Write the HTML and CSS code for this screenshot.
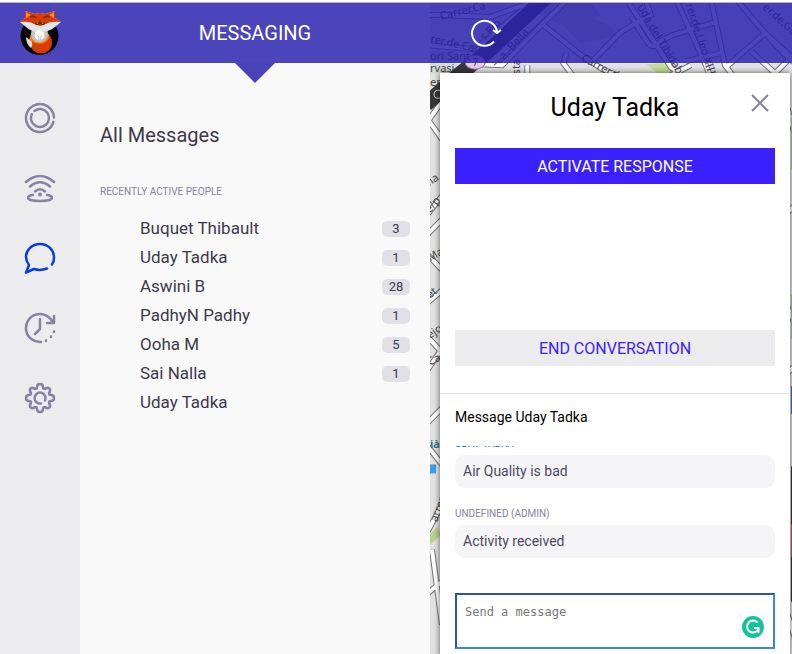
FILE: index.html
```html
<!DOCTYPE html>
<html lang="en">
<head>
<meta charset="utf-8">
<meta name="viewport" content="width=device-width, initial-scale=1">
<title>Messaging</title>
<link rel="stylesheet" href="styles.css">
</head>
<body>
<div class="app">
  <svg class="map" viewBox="0 0 362 651" preserveAspectRatio="xMinYMin slice" aria-hidden="true">
    <rect width="362" height="651" fill="#e2e2e2"/>
    <path d="M105 0L124 14L150 9L180 23L185 34L150 40L130 20ZM90 0H160L170 12L130 22Z" fill="#c9cfbf"/>
    <path d="M216 61L232 60L250 72H230Z" fill="#c6da96"/>
    <path d="M0 48H25V70H0Z" fill="#d5ddd5"/>
    <g class="street-edge">
      <path id="s1" d="M-4 12H12L60 14L110 -4M-4 42L45 46L105 -4M48 61L72 62L112 21L148 50L172 66L205 80M97 62V80M136 50L133 60L148 80M112 21L138 -4M160 60L190 29L220 12L214 -6M198 0L240 64L255 75M201 14L216 38Q222 48 230 38L242 32L285 19M245 -4L275 62L282 80M280 -4L294 62L308 80M255 58L290 50M295 64L334 30L365 58M305 -4L334 30L352 50L366 62M320 48L344 70L362 52M240 72L260 62"/>
    </g>
    <g class="street"><use href="#s1"/></g>
    <g class="street-edge">
      <path id="s2" d="M-5 122L12 98M-5 112L15 140M-2 210L14 190M-4 232L16 212M-5 248L14 268M-4 300L15 284M-5 330L18 355M-4 368L15 340M-4 420L16 400M-4 440L16 465M-4 530L12 500M2 545L12 620M-4 590L14 575M355 100L366 140M355 210L366 200M355 300L366 325M355 370L366 360M355 605L366 640"/>
    </g>
    <g class="street"><use href="#s2"/></g>
    <path d="M-4 101L28 72L56 50L116 -6" stroke="#383838" stroke-width="15" fill="none"/>
    <path d="M64 62L128 2" stroke="#666" fill="none"/>
    <ellipse cx="45" cy="59" rx="10" ry="7" fill="#e5cdea" stroke="#9b78a5"/>
    <circle cx="8" cy="91" r="4" fill="none" stroke="#ccc"/>
    <path d="M0 530L7 522L11 530L0 540Z" fill="#b9d08d"/>
    <path d="M360 114H362V166H360ZM360 290H362V335H360ZM360 540H362V552H360Z" fill="#afbf8b"/>
    <path d="M360 382H362V410H360Z" fill="#2468d0"/>
    <path d="M360 462H362V597H360Z" fill="#242424"/>
    <path d="M360 520H362V552H360Z" fill="#e05050"/>
    <rect y="460" width="6" height="9" fill="#3ba0e8"/>
    <g class="map-label">
      <text x="11" y="17" transform="rotate(-14 11 17)">Carrer.Ca</text>
      <text x="0" y="39" transform="rotate(12 0 39)">rer.de.Car</text>
      <text x="54" y="38" transform="rotate(-45 54 38)">s.Rib</text>
      <text x="0" y="57">ori Sant</text>
      <text x="0" y="69">rvasi</text>
      <text x="0" y="83">en</text>
      <text x="42" y="63">7</text>
      <text x="74" y="57" transform="rotate(-48 74 57)">a. Bella</text>
      <text x="90" y="74" transform="rotate(-90 90 74)">ista</text>
      <text x="150" y="57" transform="rotate(28 150 57)">Carrer.d</text>
      <text x="206" y="4" transform="rotate(59 206 4)">uda.del.Tibidabo</text>
      <text x="255" y="2" transform="rotate(72 255 2)">rer.de.Lleó.XIII</text>
      <text x="331" y="5" transform="rotate(42 331 5)">er.de.Gom</text>
      <text x="-4" y="185" transform="rotate(-35 -4 185)">ma</text>
      <text x="0" y="210" transform="rotate(-50 0 210)">e/p</text>
      <text x="0" y="258" transform="rotate(-30 0 258)">Ma</text>
      <text x="0" y="295" transform="rotate(-40 0 295)">et</text>
      <text x="0" y="335" transform="rotate(-35 0 335)">ejo</text>
      <text x="0" y="362" transform="rotate(-30 0 362)">Ca</text>
      <text x="0" y="444" class="map-station">ià</text>
      <text x="7" y="518" transform="rotate(-70 7 518)">arrer</text>
    </g>
  </svg>

  <header class="topbar">
    <a class="logo" href="#" aria-label="Home">
      <svg width="42" height="46" viewBox="0 0 42 46">
        <circle cx="20.500" cy="26" r="19" fill="#050505"/>
        <circle cx="22" cy="32.500" r="11" fill="#d93c05"/>
        <path d="M10 30L16 33Q26 36 30 28V24H12Z" fill="#f08312"/>
        <circle cx="20.500" cy="24" r="8.500" fill="#c4c4c4"/>
        <path d="M7 27L13 32Q14 35 12 38Q7 34 7 27Z" fill="#ddd"/>
        <path d="M1 12L6 8L6 1L16 4Q21 2 26 4L36 1L36 8L42 12L36 17Q30 22 21 22Q12 22 7 17Z" fill="#e4e4e4"/>
        <path d="M1 12L6 8L6 1L16 4Q21 2 26 4L36 1L36 8L42 12Q31 11 27 14L21 16L15 14Q11 11 1 12Z" fill="#d83b08"/>
        <path d="M7 2L12 5L7 8ZM35 2L30 5L35 8Z" fill="#f58d1a"/>
        <path d="M11 7Q14 5 17 8M25 8Q28 5 31 7" fill="none" stroke="#7a2a0a" stroke-width="1.500"/>
        <path d="M16 13Q19 16 21 12Q23 16 26 13" fill="#fff" stroke="#5b2410" stroke-width="1.500"/>
        <circle cx="20.500" cy="25" r="5" fill="#fff"/>
        <path d="M18 25L20 27V31M23 25L21.500 27V31" fill="none" stroke="#c8c8c8"/>
      </svg>
    </a>
    <h1 class="title">MESSAGING</h1>
    <button class="refresh" type="button" aria-label="Refresh">
      <svg width="32" height="30" viewBox="0 0 32 30" fill="none" stroke="#fff" stroke-width="2">
        <path d="M24 23.500A12.500 12.500 0 1 1 27 14M23 12L27 15L31 12"/>
      </svg>
    </button>
  </header>

  <nav class="rail" aria-label="Main">
    <a href="#" aria-label="Overview"><svg width="32" height="32" viewBox="0 0 32 32"><circle cx="16" cy="16" r="14" stroke-dasharray="83 5" transform="rotate(16 16 16)"/><circle cx="16" cy="16" r="9" stroke-dasharray="52 4.500" transform="rotate(232 16 16)"/></svg></a>
    <a href="#" aria-label="Signals"><svg width="32" height="32" viewBox="0 0 32 32"><path d="M2 10Q16-2 30 10M6 14.500Q16 6 26 14.500M11 19.500Q16 15 21 19.500M9 23Q4 23.500 4 26C4 30 28 30 28 26Q28 23.500 23 23"/><circle cx="16" cy="22.500" r="2" class="dot"/></svg></a>
    <a class="active" href="#" aria-label="Messaging" aria-current="page"><svg width="32" height="32" viewBox="0 0 32 32"><path d="M28 22.500Q30 20 30 15.500C30 8 24 2 16 2S2 8 2 15Q2 19 5 23L2 30.500L10 27Q16 29 23 26.500"/></svg></a>
    <a href="#" aria-label="History"><svg width="32" height="32" viewBox="0 0 32 32"><path d="M17 30A14 14 0 1 1 29 11M30 4V11H23M16 7V17L11 22"/><path d="M30 19.500V20M27 24.500V25M22 28.500V29"/></svg></a>
    <a href="#" aria-label="Settings"><svg width="32" height="32" viewBox="0 0 32 32"><path d="M13 5Q13 2 16 2T19 5Q19 7 21 7Q23 5 25.500 6.500Q27 9 25 11Q25 13 27 13Q30 13 30 16T27 19Q25 19 25 21Q27 23 25.500 25.500Q23 27 21 25Q19 25 19 27Q19 30 16 30T13 27Q13 25 11 25Q9 27 6.500 25.500Q5 23 7 21Q7 19 5 19Q2 19 2 16T5 13Q7 13 7 11Q5 9 6.500 6.500Q9 5 11 7Q13 7 13 5ZM17 21.500A5.500 5.500 0 1 1 21 18.500"/></svg></a>
  </nav>

  <main class="people">
    <h2><a href="#">All Messages</a></h2>
    <h3>RECENTLY ACTIVE PEOPLE</h3>
    <ul>
      <li><a href="#">Buquet Thibault</a><span class="count">3</span></li>
      <li><a href="#">Uday Tadka</a><span class="count">1</span></li>
      <li><a href="#">Aswini B</a><span class="count">28</span></li>
      <li><a href="#">PadhyN Padhy</a><span class="count">1</span></li>
      <li><a href="#">Ooha M</a><span class="count">5</span></li>
      <li><a href="#">Sai Nalla</a><span class="count">1</span></li>
      <li><a href="#">Uday Tadka</a></li>
    </ul>
  </main>

  <section class="card" aria-labelledby="person">
    <div class="card-top">
      <h2 id="person">Uday Tadka</h2>
      <button class="close" type="button" aria-label="Close">
        <svg width="18" height="18" viewBox="0 0 18 18" fill="none" stroke="#8782a0" stroke-width="2"><path d="M1 1L17 17M17 1L1 17"/></svg>
      </button>
      <button class="action primary" type="button">ACTIVATE RESPONSE</button>
      <button class="action secondary" type="button">END CONVERSATION</button>
    </div>
    <div class="thread">
      <h3>Message Uday Tadka</h3>
      <div class="messages">
        <p class="author self">UDAY TADKA</p>
        <p class="bubble">Air Quality is bad</p>
        <p class="author">UNDEFINED (ADMIN)</p>
        <p class="bubble">Activity received</p>
      </div>
      <div class="composer">
        <textarea aria-label="Send a message" placeholder="Send a message" autofocus></textarea>
        <svg class="checker" width="22" height="22" viewBox="0 0 22 22" aria-hidden="true"><circle cx="11" cy="11" r="11" fill="#15c39a"/><path d="M15.500 6.500A6 6 0 1 0 16 14M12 12H16.500V17" fill="none" stroke="#fff" stroke-width="2"/></svg>
      </div>
    </div>
  </section>
</div>
</body>
</html>
```
FILE: styles.css
```css
* { box-sizing: border-box; }

body {
  height: 100vh;
  margin: 0;
  overflow: hidden;
  background: #fff;
  color: #3d3a4c;
  font-family: Roboto, "Liberation Sans", sans-serif;
}

h1, h2, h3, p, ul { margin: 0; padding: 0; font-weight: 400; }
ul { list-style: none; }
a { color: inherit; text-decoration: none; }
button { border: 0; padding: 0; background: none; font-family: inherit; cursor: pointer; }
svg { display: block; }

.app {
  display: grid;
  grid-template-columns: 80px 350px minmax(0, 1fr);
  grid-template-rows: 60px minmax(0, 1fr);
  height: 100vh;
  border-top: 1px solid #b5b5b5;
  margin-top: 2px;
  overflow: hidden;
}

.map {
  grid-column: 3;
  grid-row: 1 / 3;
  width: 100%;
  height: 100%;
}

.street-edge { fill: none; stroke: #777; stroke-width: 6; }
.street { fill: none; stroke: #fff; stroke-width: 4; }
.map-label { font-family: "Noto Sans", sans-serif; font-size: 11px; fill: #444; }
.map-station { fill: #35758f; font-weight: 700; }

.topbar {
  grid-column: 1 / 4;
  grid-row: 1;
  z-index: 1;
  display: grid;
  grid-template-columns: 80px 350px minmax(0, 1fr);
  align-items: center;
  background: rgba(42, 32, 173, 0.84);
  color: #fff;
}

.logo { justify-self: center; }
.title { position: relative; font-size: 20px; line-height: 60px; text-align: center; }
.title::after {
  content: "";
  position: absolute;
  top: 60px;
  left: 50%;
  margin-left: -20px;
  border: 20px solid transparent;
  border-bottom: 0;
  border-top-color: #4b43b5;
}
.refresh { justify-self: start; margin-left: 40px; }

.rail {
  grid-column: 1;
  grid-row: 2;
  display: flex;
  flex-direction: column;
  align-items: center;
  gap: 38px;
  padding-top: 39px;
  background: #ececee;
}
.rail svg { fill: none; stroke: #8782a0; stroke-width: 2.5; stroke-linecap: round; stroke-linejoin: round; }
.rail .active svg { stroke: #0a3de0; }
.rail .dot { fill: #8782a0; stroke: none; }

.people { grid-column: 2; grid-row: 2; padding: 60px 20px 0; background: #f9f9f9; }
.people h2 { font-size: 20px; line-height: 24px; }
.people h3 { margin-top: 36px; color: #8782a0; font-size: 10px; line-height: 18px; }
.people ul { margin: 13px 0 0 40px; }
.people li { display: flex; align-items: center; justify-content: space-between; font-size: 17px; line-height: 29px; }
.count {
  width: 28px;
  border-radius: 5px;
  background: #e1e0e6;
  font-size: 13px;
  line-height: 16px;
  text-align: center;
}

.card {
  grid-column: 3;
  grid-row: 2;
  z-index: 1;
  display: flex;
  flex-direction: column;
  margin: 10px 2px 0 10px;
  background: #fff;
  box-shadow: 0 0 6px rgba(0, 0, 0, 0.6);
  color: #000;
}
.card-top { position: relative; padding: 20px 15px 27px; border-bottom: 1px solid #e6e6e8; }
.card-top h2 { font-size: 25px; line-height: 30px; text-align: center; }
.close { position: absolute; top: 21px; right: 21px; }
.action { display: block; width: 100%; height: 36px; font-size: 16px; }
.primary { margin-top: 25px; background: #3b21ff; color: #fff; }
.secondary { margin-top: 146px; background: #ececee; color: #3b21ff; }

.thread { padding: 13px 15px 0; }
.thread h3 { font-size: 14px; line-height: 20px; }
.messages { display: flex; flex-direction: column; justify-content: flex-end; height: 112px; margin-top: 19px; overflow: hidden; }
.author { flex: none; padding-bottom: 4px; color: #8782a0; font-size: 10px; line-height: 14px; }
.bubble + .author { margin-top: 19px; }
.author.self { color: #1458b8; }
.bubble { flex: none; padding: 0 8px; border-radius: 10px; background: #f5f5f7; color: #4c495b; font-size: 14px; line-height: 33px; }
.composer { position: relative; margin-top: 35px; }
.composer textarea {
  display: block;
  width: 100%;
  height: 56px;
  padding: 9px 8px;
  border: 2px solid #3b82f6;
  border-top-color: #2456ad;
  border-left-color: #2456ad;
  outline: 0;
  resize: none;
  color: #000;
  font: 12px/16px "DejaVu Sans Mono", monospace;
}
.composer textarea::placeholder { color: #777; }
.checker { position: absolute; right: 11px; bottom: 11px; }
```
